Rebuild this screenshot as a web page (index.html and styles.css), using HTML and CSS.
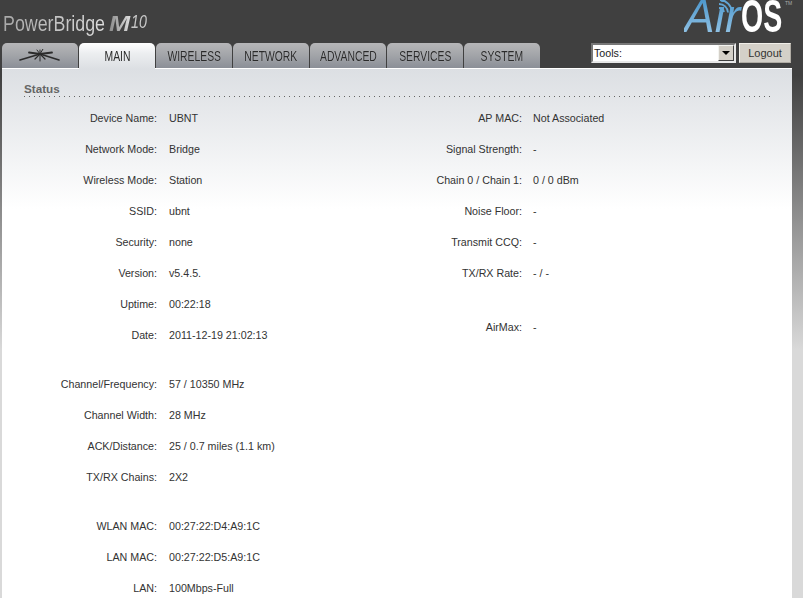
FILE: index.html
```html
<!DOCTYPE html>
<html lang="en">
<head>
<meta charset="utf-8">
<title>PowerBridge M10 - Main</title>
<link rel="stylesheet" href="styles.css">
</head>
<body>
<div class="page">
  <header class="masthead">
    <div class="product"><span class="product-name">PowerBridge</span><span class="product-m">M</span><span class="product-num">10</span></div>
    <div class="airos">
      <span class="air">Air</span><span class="os">OS</span><span class="tm">TM</span>
      <svg class="waves" width="18" height="14" viewBox="0 0 18 14" fill="none" stroke="#62a6d6" stroke-width="1.8">
        <path d="M2 8a5 5 0 0 1 5 4"/>
        <path d="M2 4a9 9 0 0 1 9 8.500"/>
        <path d="M3 0a13 13 0 0 1 12 12.500"/>
      </svg>
    </div>
  </header>
  <nav class="navbar">
    <div class="tabs">
      <a class="tab tab-logo">
        <svg width="42" height="14" viewBox="0 0 42 14" fill="none" stroke="#2b2b2b" stroke-linecap="round">
          <path d="M21 5L1 11" stroke-width="1.600"/>
          <path d="M21 5L40 11" stroke-width="1.600"/>
          <path d="M21 5L10 3.500" stroke-width="1.800"/>
          <path d="M21 5L33 3.500" stroke-width="1.800"/>
          <path d="M21 1L21 12" stroke-width="1"/>
          <path d="M21 5L16 10" stroke-width="1.200"/>
          <path d="M21 5L26 10" stroke-width="1.200"/>
          <path d="M21 5L24 0" stroke-width="1"/>
          <path d="M21 5L18 1" stroke-width="1"/>
        </svg>
      </a>
      <a class="tab tab-active"><span class="tab-text">MAIN</span></a>
      <a class="tab"><span class="tab-text">WIRELESS</span></a>
      <a class="tab"><span class="tab-text">NETWORK</span></a>
      <a class="tab"><span class="tab-text">ADVANCED</span></a>
      <a class="tab"><span class="tab-text">SERVICES</span></a>
      <a class="tab"><span class="tab-text">SYSTEM</span></a>
    </div>
    <div class="tools">
      <div class="select">
        <span class="select-text">Tools:</span>
        <span class="select-btn"><span class="select-arrow"></span></span>
      </div>
      <button class="logout" type="button">Logout</button>
    </div>
  </nav>
  <main class="panel">
    <h2 class="section-title">Status</h2>
    <div class="dots"></div>
    <div class="columns">
      <div class="col col-left">
        <div class="group">
          <div class="row"><span class="label">Device Name:</span><span class="value">UBNT</span></div>
          <div class="row"><span class="label">Network Mode:</span><span class="value">Bridge</span></div>
          <div class="row"><span class="label">Wireless Mode:</span><span class="value">Station</span></div>
          <div class="row"><span class="label">SSID:</span><span class="value">ubnt</span></div>
          <div class="row"><span class="label">Security:</span><span class="value">none</span></div>
          <div class="row"><span class="label">Version:</span><span class="value">v5.4.5.</span></div>
          <div class="row"><span class="label">Uptime:</span><span class="value">00:22:18</span></div>
          <div class="row"><span class="label">Date:</span><span class="value">2011-12-19 21:02:13</span></div>
        </div>
        <div class="group">
          <div class="row"><span class="label">Channel/Frequency:</span><span class="value">57 / 10350 MHz</span></div>
          <div class="row"><span class="label">Channel Width:</span><span class="value">28 MHz</span></div>
          <div class="row"><span class="label">ACK/Distance:</span><span class="value">25 / 0.7 miles (1.1 km)</span></div>
          <div class="row"><span class="label">TX/RX Chains:</span><span class="value">2X2</span></div>
        </div>
        <div class="group">
          <div class="row"><span class="label">WLAN MAC:</span><span class="value">00:27:22:D4:A9:1C</span></div>
          <div class="row"><span class="label">LAN MAC:</span><span class="value">00:27:22:D5:A9:1C</span></div>
          <div class="row"><span class="label">LAN:</span><span class="value">100Mbps-Full</span></div>
        </div>
      </div>
      <div class="col col-right">
        <div class="row"><span class="label">AP MAC:</span><span class="value">Not Associated</span></div>
        <div class="row"><span class="label">Signal Strength:</span><span class="value">-</span></div>
        <div class="row"><span class="label">Chain 0 / Chain 1:</span><span class="value">0 / 0 dBm</span></div>
        <div class="row"><span class="label">Noise Floor:</span><span class="value">-</span></div>
        <div class="row"><span class="label">Transmit CCQ:</span><span class="value">-</span></div>
        <div class="row"><span class="label">TX/RX Rate:</span><span class="value">- / -</span></div>
        <div class="row row-airmax"><span class="label">AirMax:</span><span class="value">-</span></div>
      </div>
    </div>
  </main>
</div>
</body>
</html>
```

FILE: styles.css
```css
html, body {
  margin: 0;
  height: 598px;
  overflow: hidden;
}
body {
  background: linear-gradient(to bottom, #404040 0, #404040 75px, #d9d9d9 350px, #d9d9d9 100%);
  font-family: "Liberation Sans", Arial, sans-serif;
  font-size: 10.7px;
  color: #333;
}
.page {
  display: flex;
  flex-direction: column;
}
.masthead {
  height: 43px;
  display: flex;
  justify-content: space-between;
  overflow: hidden;
}
.product {
  display: flex;
  align-items: flex-start;
  height: 43px;
  padding: 9px 0 0 3px;
  box-sizing: border-box;
  font-size: 22px;
  line-height: 30px;
  white-space: nowrap;
}
.product-name {
  display: block;
  margin-right: -20px;
  transform: scaleX(.81);
  transform-origin: left center;
  background: linear-gradient(to right, #a8a8a8, #dcdcdc);
  -webkit-background-clip: text;
  background-clip: text;
  color: transparent;
}
.product-m {
  display: block;
  width: 22px;
  font-weight: bold;
  font-style: italic;
  font-size: 22px;
  transform: scaleX(1.15);
  transform-origin: left center;
  background: linear-gradient(to right, #8a8a8a, #ececec);
  -webkit-background-clip: text;
  background-clip: text;
  color: transparent;
}
.product-num {
  display: block;
  font-style: italic;
  font-size: 19px;
  line-height: 20px;
  margin-top: 3px;
  color: #c8c8c8;
  transform: scaleX(.75);
  transform-origin: left center;
}
.airos {
  position: relative;
  width: 119px;
  height: 43px;
  display: flex;
  align-items: flex-start;
  font-size: 46px;
  line-height: 46px;
  white-space: nowrap;
}
.air {
  display: block;
  width: 60px;
  margin-top: -7px;
  margin-right: -3px;
  font-style: italic;
  background: linear-gradient(to bottom, #3f8fc8, #9cc9e8);
  -webkit-background-clip: text;
  background-clip: text;
  color: transparent;
}
.os {
  display: block;
  width: 44px;
  margin-top: -7px;
  font-weight: bold;
  color: #fff;
  transform: scaleX(.62);
  transform-origin: left top;
}
.tm {
  font-size: 5px;
  line-height: 6px;
  color: #aaa;
}
.waves {
  position: absolute;
  left: 33px;
  top: 0;
}
.navbar {
  display: flex;
  justify-content: space-between;
  padding-left: 2px;
  height: 25px;
}
.tabs {
  display: flex;
  gap: 1px;
}
.tab {
  width: 76px;
  height: 25px;
  display: flex;
  align-items: center;
  justify-content: center;
  box-sizing: border-box;
  border-radius: 5px 5px 0 0;
  background: linear-gradient(to bottom, #b6b6b8 0, #a4a6aa 45%, #8b8f97 100%);
  color: #2a2a2a;
  padding-top: 1px;
}
.tab-text {
  display: block;
  font-size: 14px;
  transform: scaleX(.74);
  text-shadow: 0 0 1px #c4c6ca;
}
.tab-active {
  position: relative;
  height: 26px;
  background: linear-gradient(to bottom, #ffffff 0, #eceef0 40%, #dcdfe3 100%);
  padding-top: 0;
}
.tab-active .tab-text {
  text-shadow: none;
}
.tab-logo {
  padding-top: 0;
}
.tools {
  display: flex;
  gap: 3px;
  padding-right: 12px;
  height: 20px;
}
.select {
  width: 145px;
  height: 20px;
  box-sizing: border-box;
  display: flex;
  justify-content: space-between;
  background: #fff;
  border: 2px solid;
  border-color: #777 #e8e8e8 #e8e8e8 #777;
  color: #222;
  line-height: 16px;
}
.select-text {
  padding-left: 1px;
}
.select-btn {
  width: 16px;
  height: 16px;
  box-sizing: border-box;
  display: flex;
  align-items: center;
  justify-content: center;
  background: #d4d0c8;
  border: 1px solid;
  border-color: #f4f4f0 #404040 #404040 #f4f4f0;
}
.select-arrow {
  width: 0;
  height: 0;
  border-style: solid;
  border-width: 4px 4px 0 4px;
  border-color: #000 transparent transparent transparent;
}
.logout {
  width: 52px;
  height: 20px;
  padding: 0;
  background: #d4d0c8;
  border: 1px solid;
  border-color: #f0eee8 #b0aca4 #b0aca4 #f0eee8;
  font-family: "Liberation Sans", sans-serif;
  font-size: 11px;
  color: #333;
}
.panel {
  margin-left: 2px;
  width: 790px;
  height: 530px;
  box-sizing: border-box;
  border-top: 1px solid #fff;
  background: linear-gradient(to bottom, #dcdfe3 0, #ffffff 140px);
}
.section-title {
  margin: 0;
  padding: 13px 0 0 22px;
  font-size: 11.7px;
  line-height: 14px;
  font-weight: bold;
  color: #666;
}
.dots {
  height: 1px;
  margin: 0 22px;
  background: repeating-linear-gradient(to right, #666 0, #666 1px, transparent 1px, transparent 5px);
}
.columns {
  display: flex;
  padding-top: 6px;
}
.col-left {
  width: 363px;
}
.group + .group {
  margin-top: 18px;
}
.row {
  display: flex;
  height: 31px;
  line-height: 31px;
  white-space: nowrap;
}
.label {
  width: 155px;
  text-align: right;
}
.value {
  margin-left: 12px;
}
.col-right .label {
  width: 157px;
}
.col-right .value {
  margin-left: 11px;
}
.row-airmax {
  margin-top: 23px;
}
```
